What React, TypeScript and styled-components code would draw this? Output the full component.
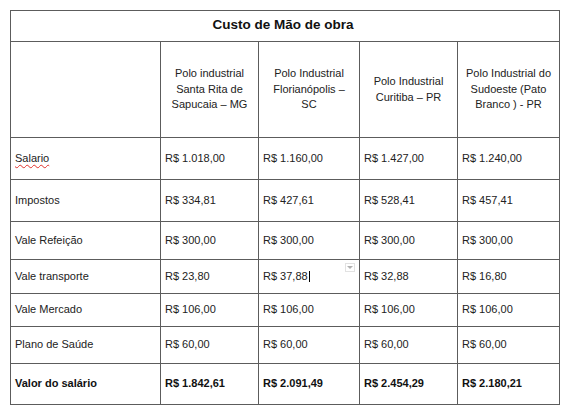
import React from "react";
import styled, { createGlobalStyle } from "styled-components";

const GlobalStyle = createGlobalStyle`
  html, body {
    margin: 0;
    padding: 0;
    background: #ffffff;
  }
  body {
    font-family: "Liberation Sans", Arial, "Helvetica Neue", sans-serif;
    color: #222222;
  }
  * { box-sizing: border-box; }
`;

const Page = styled.div`
  padding: 10px 0 0 10px;
  width: 572px;
  height: 418px;
`;

const Grid = styled.div`
  display: grid;
  grid-template-columns: 150px 98px 101px 98px 102px;
  grid-template-rows: 31px 96px 42px 42px 38px 34px 33px 37px 41px;
  width: 550px;
  border-left: 1px solid #5c5c5c;
  border-top: 1px solid #5c5c5c;
`;

const Cell = styled.div<{ $bold?: boolean; $center?: boolean }>`
  position: relative;
  display: flex;
  align-items: center;
  justify-content: ${(p) => (p.$center ? "center" : "flex-start")};
  text-align: ${(p) => (p.$center ? "center" : "left")};
  padding: 0 4px;
  border-right: 1px solid #5c5c5c;
  border-bottom: 1px solid #5c5c5c;
  font-size: 11px;
  line-height: 15.5px;
  font-weight: ${(p) => (p.$bold ? 700 : 400)};
  color: ${(p) => (p.$bold ? "#111111" : "#222222")};
  white-space: nowrap;
`;

const TitleCell = styled(Cell)`
  grid-column: 1 / span 5;
  justify-content: center;
  font-size: 13.5px;
  font-weight: 700;
  color: #111111;
  padding-bottom: 3px;
  padding-left: 0;
`;

const Spell = styled.span`
  text-decoration: underline wavy #e0302a;
  text-decoration-thickness: 1px;
  text-underline-offset: 2px;
`;

const Caret = styled.span`
  display: inline-block;
  width: 1.5px;
  height: 11px;
  margin-left: 1px;
  background: #000000;
  vertical-align: -1px;
`;

const DropBox = styled.span`
  position: absolute;
  top: 3px;
  right: 4px;
  width: 10px;
  height: 9px;
  border: 1px solid #e2e2e2;
  background: #ffffff;
  display: flex;
  align-items: flex-start;
  justify-content: center;
  padding-top: 2px;
`;

const Triangle = styled.span`
  width: 0;
  height: 0;
  border-left: 3px solid transparent;
  border-right: 3px solid transparent;
  border-top: 3px solid #b0b0b0;
`;

const headers = [
  ["Polo industrial", "Santa Rita de", "Sapucaia – MG"],
  ["Polo Industrial", "Florianópolis –", "SC"],
  ["Polo Industrial", "Curitiba – PR"],
  ["Polo Industrial do", "Sudoeste (Pato", "Branco ) - PR"],
];

type Row = { label: string; values: string[]; bold?: boolean };

const rows: Row[] = [
  { label: "Salario", values: ["R$ 1.018,00", "R$ 1.160,00", "R$ 1.427,00", "R$ 1.240,00"] },
  { label: "Impostos", values: ["R$ 334,81", "R$ 427,61", "R$ 528,41", "R$ 457,41"] },
  { label: "Vale Refeição", values: ["R$ 300,00", "R$ 300,00", "R$ 300,00", "R$ 300,00"] },
  { label: "Vale transporte", values: ["R$ 23,80", "R$ 37,88", "R$ 32,88", "R$ 16,80"] },
  { label: "Vale Mercado", values: ["R$ 106,00", "R$ 106,00", "R$ 106,00", "R$ 106,00"] },
  { label: "Plano de Saúde", values: ["R$ 60,00", "R$ 60,00", "R$ 60,00", "R$ 60,00"] },
  {
    label: "Valor do salário",
    values: ["R$ 1.842,61", "R$ 2.091,49", "R$ 2.454,29", "R$ 2.180,21"],
    bold: true,
  },
];

export default function App() {
  return (
    <Page>
      <GlobalStyle />
      <Grid>
        <TitleCell>Custo de Mão de obra</TitleCell>
        <Cell />
        {headers.map((lines, i) => (
          <Cell key={i} $center>
            <div>
              {lines.map((l, j) => (
                <div key={j}>{l}</div>
              ))}
            </div>
          </Cell>
        ))}
        {rows.map((r, ri) => (
          <React.Fragment key={ri}>
            <Cell $bold={r.bold}>
              {r.label === "Salario" ? <Spell>{r.label}</Spell> : r.label}
            </Cell>
            {r.values.map((v, vi) => {
              const editing = ri === 3 && vi === 1;
              return (
                <Cell key={vi} $bold={r.bold}>
                  {v}
                  {editing && <Caret />}
                  {editing && (
                    <DropBox>
                      <Triangle />
                    </DropBox>
                  )}
                </Cell>
              );
            })}
          </React.Fragment>
        ))}
      </Grid>
    </Page>
  );
}
